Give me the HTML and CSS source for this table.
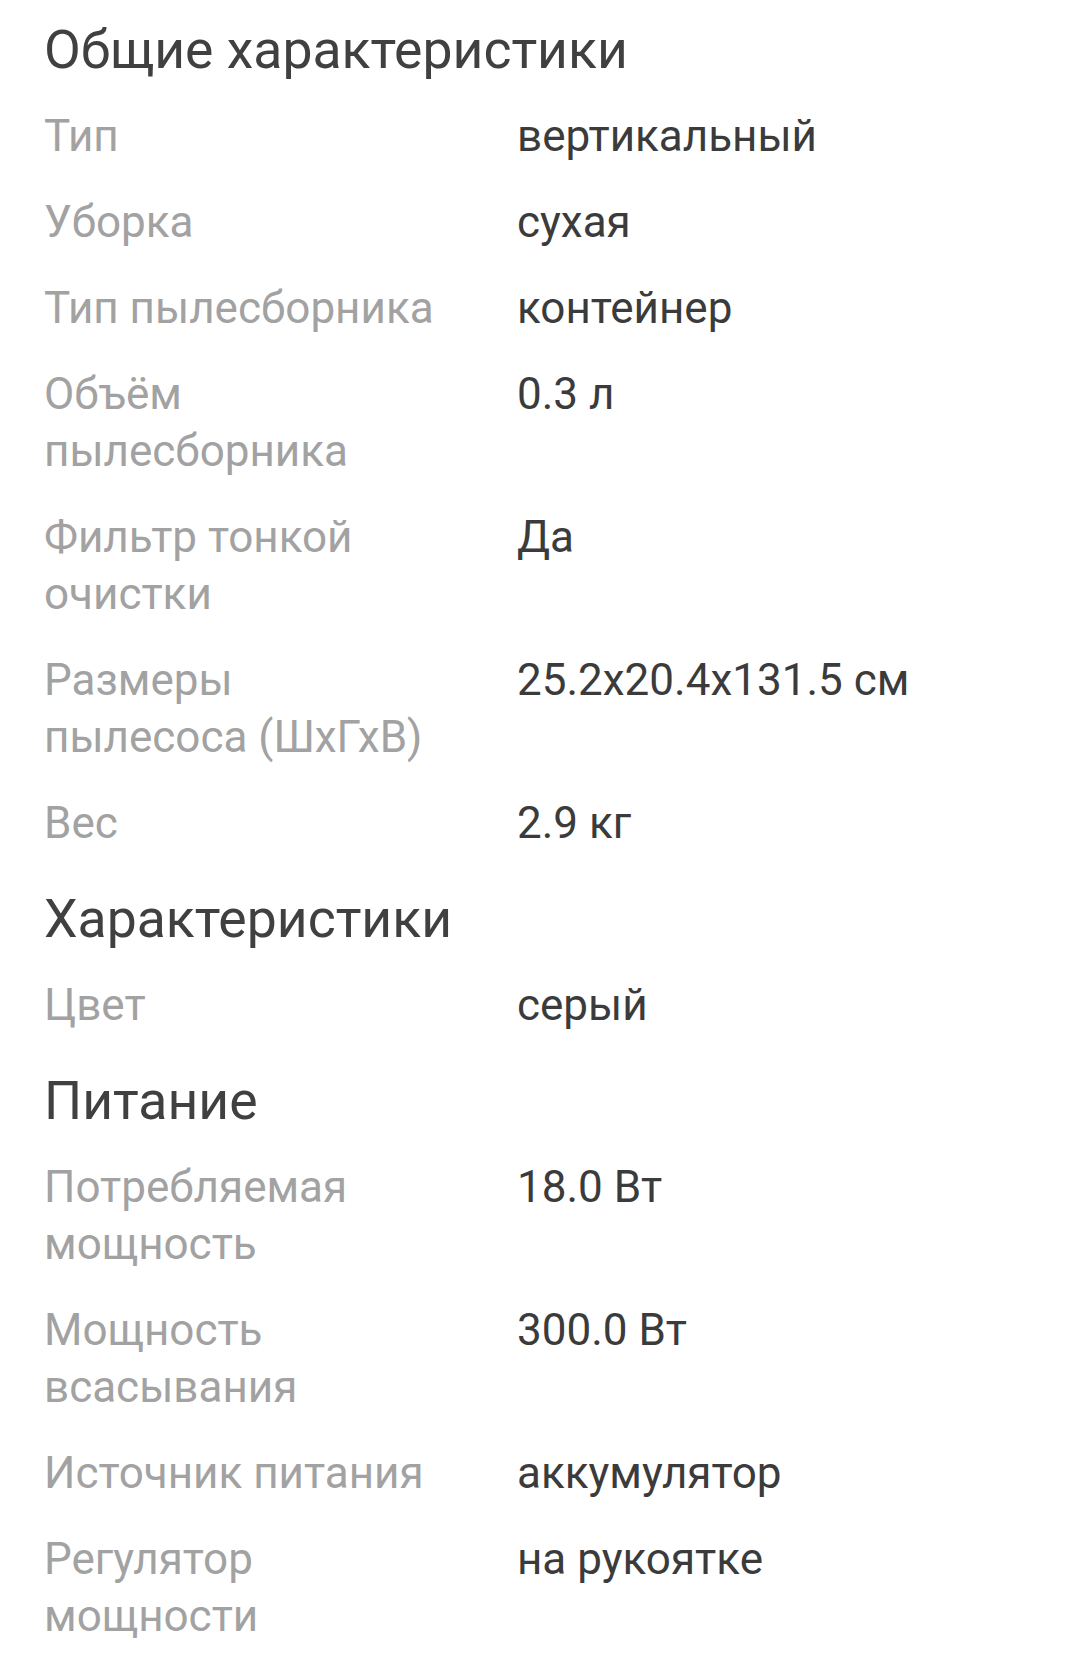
FILE: index.html
```html
<!DOCTYPE html>
<html lang="ru">
<head>
<meta charset="utf-8">
<link rel="stylesheet" href="styles.css">
</head>
<body>
<div class="specs">
  <section class="group">
    <h2 class="group-title">Общие характеристики</h2>
    <div class="row"><div class="label">Тип</div><div class="value">вертикальный</div></div>
    <div class="row"><div class="label">Уборка</div><div class="value">сухая</div></div>
    <div class="row"><div class="label">Тип пылесборника</div><div class="value">контейнер</div></div>
    <div class="row"><div class="label">Объём пылесборника</div><div class="value">0.3 л</div></div>
    <div class="row"><div class="label">Фильтр тонкой очистки</div><div class="value">Да</div></div>
    <div class="row"><div class="label">Размеры пылесоса (ШхГхВ)</div><div class="value">25.2x20.4x131.5 см</div></div>
    <div class="row"><div class="label">Вес</div><div class="value">2.9 кг</div></div>
  </section>
  <section class="group">
    <h2 class="group-title">Характеристики</h2>
    <div class="row"><div class="label">Цвет</div><div class="value">серый</div></div>
  </section>
  <section class="group">
    <h2 class="group-title">Питание</h2>
    <div class="row"><div class="label">Потребляемая мощность</div><div class="value">18.0 Вт</div></div>
    <div class="row"><div class="label">Мощность всасывания</div><div class="value">300.0 Вт</div></div>
    <div class="row"><div class="label">Источник питания</div><div class="value">аккумулятор</div></div>
    <div class="row"><div class="label">Регулятор мощности</div><div class="value">на рукоятке</div></div>
  </section>
</div>
</body>
</html>
```
FILE: styles.css
```css
html, body {
  margin: 0;
  padding: 0;
  background: #ffffff;
}
body {
  font-family: Roboto, "Noto Sans", "DejaVu Sans", sans-serif;
  overflow: hidden;
  height: 1663px;
}
.specs {
  padding: 20px 44px 0 44px;
}
.group {
  display: flex;
  flex-direction: column;
}
.group + .group {
  margin-top: 23px;
}
.group-title {
  margin: 0 0 13px 0;
  font-size: 53.5px;
  line-height: 60px;
  font-weight: 400;
  color: #404040;
}
.row {
  display: grid;
  grid-template-columns: 396px 1fr;
  column-gap: 77px;
  padding: 14.5px 0;
  font-size: 44px;
  line-height: 57px;
}
.label {
  color: #a2a2a2;
}
.value {
  color: #3b3b3b;
}
```
